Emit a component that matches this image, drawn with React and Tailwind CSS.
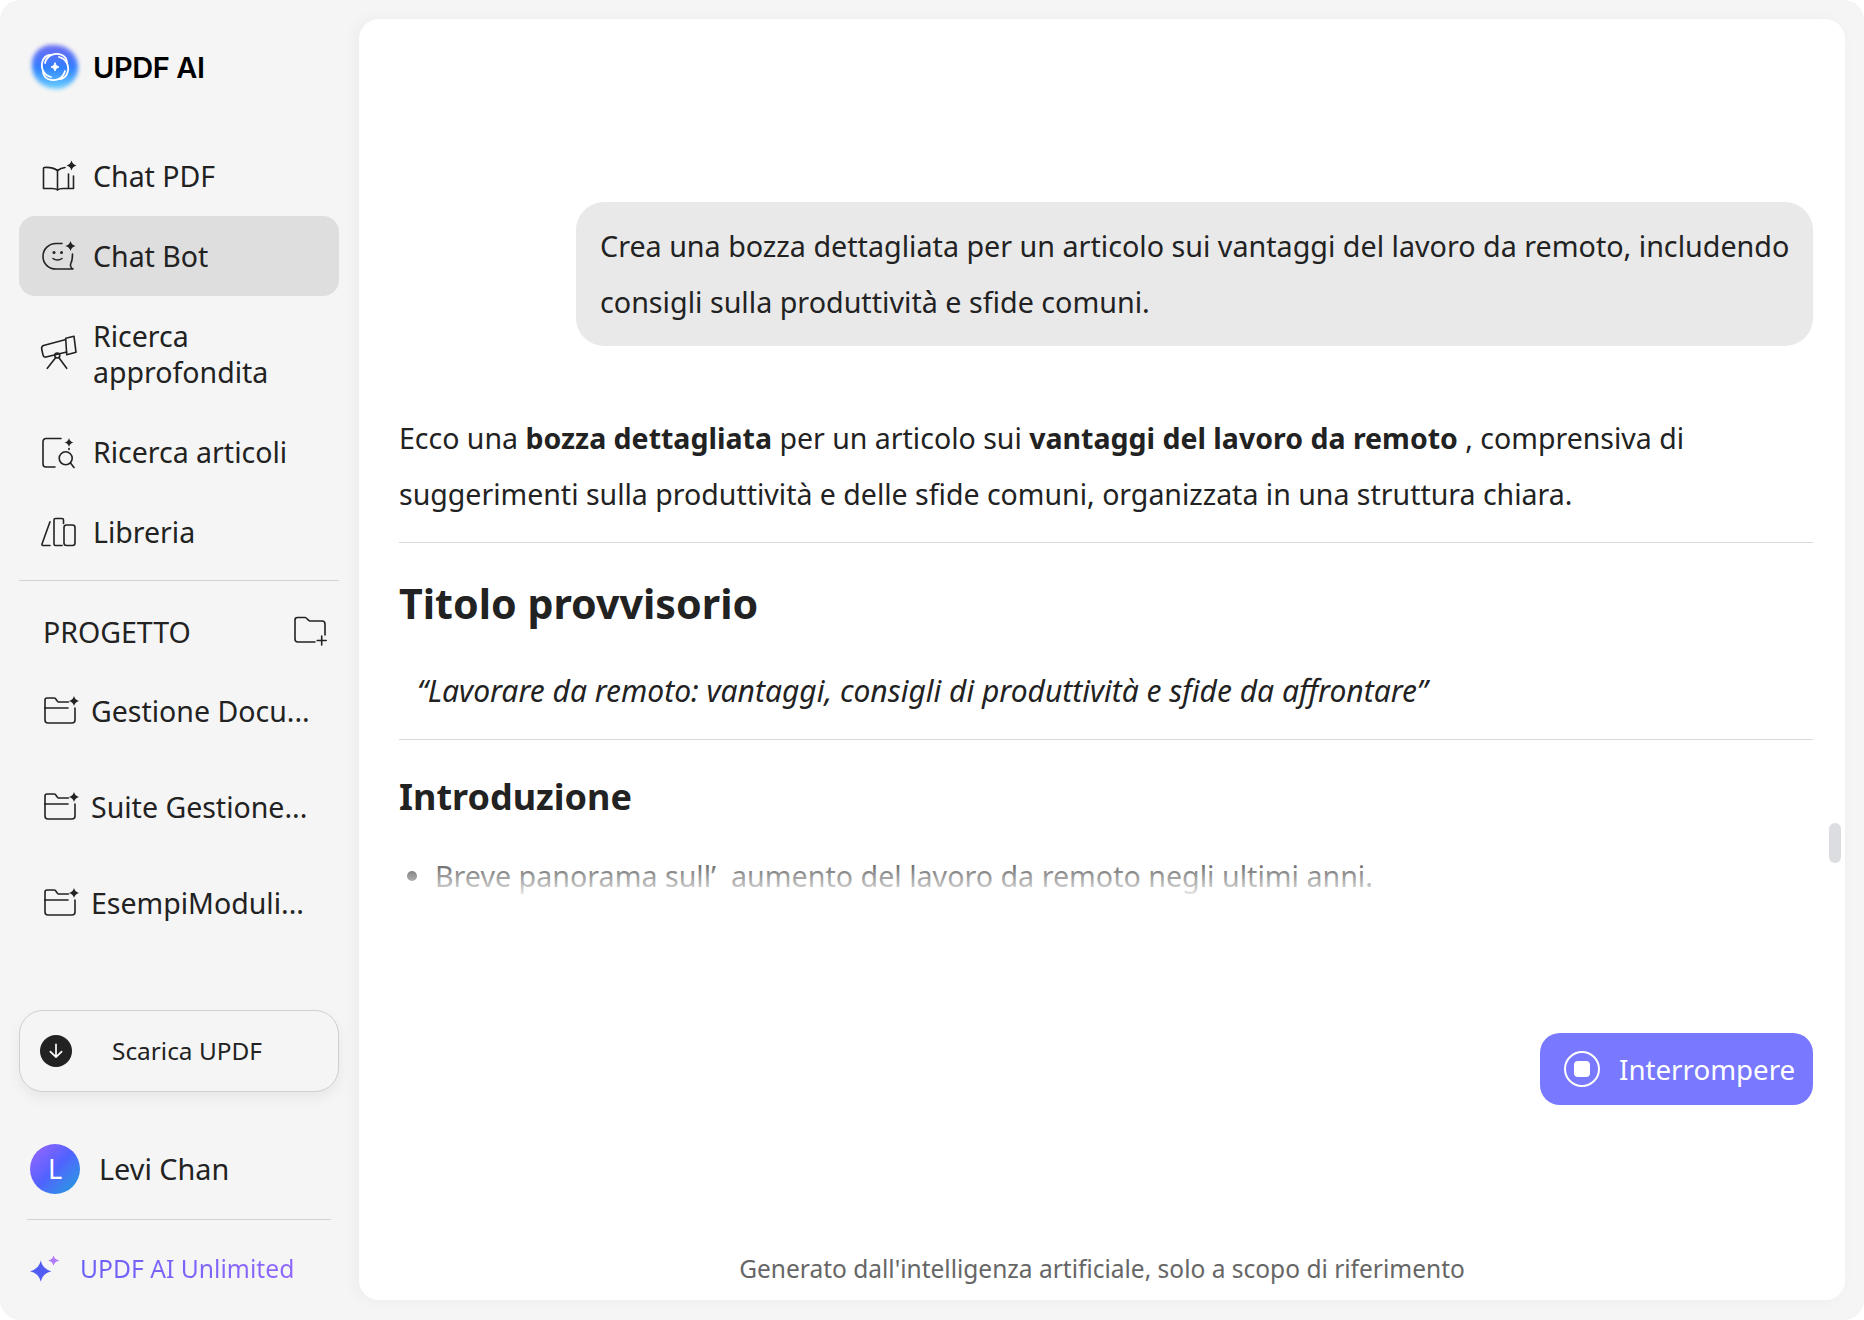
import React from "react";

const Spark = ({ x, y, r = 3.5 }) => (
  <path
    d={`M${x} ${y - r}Q${x + r * 0.2} ${y - r * 0.2} ${x + r} ${y}Q${x + r * 0.2} ${y + r * 0.2} ${x} ${y + r}Q${x - r * 0.2} ${y + r * 0.2} ${x - r} ${y}Q${x - r * 0.2} ${y - r * 0.2} ${x} ${y - r}Z`}
    fill="#222"
    stroke="none"
  />
);

const Icon = ({ children }) => (
  <svg viewBox="0 0 36 36" fill="none" stroke="#222" strokeWidth="1.6" strokeLinecap="round" strokeLinejoin="round" className="w-9 h-9 shrink-0 overflow-visible">
    {children}
  </svg>
);

const BookIcon = () => (
  <Icon>
    <path d="M16.500 12.500C13 10 8 9 3 9.500 2.500 9.500 2.500 10 2.500 10.500V30.500H11c2.500 0 4.300.3 5.500 1.500 1.200-1.200 3-1.500 5.500-1.500h10.500V18" />
    <path d="M16.500 12.500V31.500" />
    <path d="M24 9.500c-3 .3-5.500 1.500-7.500 3" />
    <path d="M27.500 16v14" />
    <Spark x={30.500} y={7.500} r={5} />
  </Icon>
);

const BotIcon = () => (
  <Icon>
    <path d="M21 5.500H15C8 5.500 2 11 2 18.500S8 31 15 31H32C29.500 30 29 27 30 25c1-2 1.500-5 1.500-9" />
    <circle cx="13" cy="14.500" r="1.500" fill="#222" stroke="none" />
    <circle cx="20.500" cy="14.500" r="1.500" fill="#222" stroke="none" />
    <path d="M12 20.500c2.500 2 6.500 2 9 0" />
    <Spark x={29.500} y={8} r={5} />
  </Icon>
);

const ScopeIcon = () => (
  <Icon>
    <path d="M24 3.700 2.500 9.500Q.2 10.500.7 13L2 19q.5 2.500 3 2L25.700 16" />
    <path d="M24.700 2.300 33 .3 35 16.300 25.700 18.700Z" />
    <circle cx="16.300" cy="19.500" r="2.500" />
    <path d="M14.800 21.500 6.300 32.300M17.800 21.500 25.700 32.300" />
  </Icon>
);

const SearchDocIcon = () => (
  <Icon>
    <path d="M20 4.500H5a3 3 0 0 0-3 3V30a3 3 0 0 0 3 3h9" />
    <circle cx="24.700" cy="24.300" r="6.500" />
    <path d="M29.500 29 33 33.500" />
    <path d="M28 14.500v1" />
    <Spark x={28} y={8.500} r={4.500} />
  </Icon>
);

const LibraryIcon = () => (
  <Icon>
    <path d="M9 7.700 1 30q-.5 1.500 1 1.500h7" />
    <path d="M21 31.500h-6.500a1.500 1.500 0 0 1-1.500-1.500V6a1.500 1.500 0 0 1 1.500-1.500H21a1.500 1.500 0 0 1 1.500 1.500v3.500" />
    <rect x="23" y="11" width="11" height="20.500" rx="2.500" />
  </Icon>
);

const FolderSparkIcon = () => (
  <Icon>
    <path d="M2 15V7a2 2 0 0 1 2-2h7.500c1.500 0 2.500 4 4 4h10" />
    <path d="M2 15v12a3 3 0 0 0 3 3h24a3 3 0 0 0 3-3V15" />
    <path d="M2 15h23" />
    <Spark x={31} y={8} r={5} />
  </Icon>
);

const FolderPlusIcon = () => (
  <Icon>
    <path d="M22 28H5a3 3 0 0 1-3-3V6a2.500 2.500 0 0 1 2.500-2.500H12c2 0 3 3.500 5 3.500h12a3 3 0 0 1 3 3v11" />
    <path d="M28.700 22v9M24.200 26.500h9" />
  </Icon>
);

const Logo = () => (
  <div className="relative w-[48px] h-[46px] flex items-center justify-center">
    <div className="absolute inset-[1px] rounded-[42%_50%_48%_52%] bg-gradient-to-b from-[#6a6cf2] via-[#2f7dff] to-[#6fd0ff] blur-[2px]" />
    <svg viewBox="0 0 36 36" fill="none" stroke="#fff" strokeWidth="1.800" strokeLinecap="round" className="relative w-9 h-9">
      <path d="M8 14C10 6 18 3 25 6c3 1.500 5 4.500 5 8" />
      <path d="M28 22C26 30 18 33 11 30c-3-1.500-5-4.500-5-8" />
      <path d="M22 8C30 10 33 18 30 25c-1.500 3-4.500 5-8 5" />
      <path d="M14 28C6 26 3 18 6 11c1.500-3 4.500-5 8-5" />
      <path d="M18 14Q18.500 17.500 22 18 18.500 18.500 18 22 17.500 18.500 14 18 17.500 17.500 18 14Z" fill="#fff" stroke="#fff" strokeWidth="1" />
    </svg>
  </div>
);

const NavItem = ({ icon, active, children }) => (
  <div className={`flex items-center gap-4 pl-[22px] pr-4 h-20 rounded-[16px] text-[28.5px] leading-[36px] ${active ? "bg-[#dedede]" : ""}`}>
    {icon}
    <span>{children}</span>
  </div>
);

const ProjectItem = ({ children }) => (
  <div className="flex items-center gap-3 pl-6 h-24 text-[28.5px] text-[#222]">
    <FolderSparkIcon />
    <span>{children}</span>
  </div>
);

export default function App() {
  return (
    <div className="w-[1864px] h-[1320px] bg-white overflow-hidden font-['Noto_Sans',sans-serif] text-[#222]">
      <div className="w-full h-full flex bg-[#f5f5f5] rounded-[20px]">
        {/* Sidebar */}
        <aside className="w-[359px] shrink-0 h-full flex flex-col pl-[19px] pr-5">
          <div className="flex items-center gap-[14px] pl-[12px] h-[46px] mt-[44px] mb-[46px]">
            <Logo />
            <span className="font-['Inter',sans-serif] text-[29px] font-semibold text-black tracking-[-0.4px] pt-[2px]">UPDF AI</span>
          </div>

          <NavItem icon={<BookIcon />}>Chat PDF</NavItem>
          <NavItem icon={<BotIcon />} active>Chat Bot</NavItem>
          <div className="py-[22px]">
            <div className="flex items-center gap-4 pl-[22px] text-[28.5px] leading-[36px]">
              <ScopeIcon />
              <span>Ricerca<br />approfondita</span>
            </div>
          </div>
          <NavItem icon={<SearchDocIcon />}>Ricerca articoli</NavItem>
          <NavItem icon={<LibraryIcon />}>Libreria</NavItem>

          <div className="h-px bg-[#d2d2d2] mt-2" />

          <div className="flex items-center justify-between pl-[24px] pr-[10px] mt-[27px] h-12 text-[28.5px]">
            <span>PROGETTO</span>
            <FolderPlusIcon />
          </div>

          <div className="mt-[7px]">
            <ProjectItem>Gestione Docu...</ProjectItem>
            <ProjectItem>Suite Gestione...</ProjectItem>
            <ProjectItem>EsempiModuli...</ProjectItem>
          </div>

          <div className="mt-[59px] h-[82px] rounded-[24px] border border-[#d0d0d0] bg-[#f5f5f5] shadow-[0_6px_14px_rgba(0,0,0,0.06)] flex items-center pl-5">
            <span className="w-8 h-8 rounded-full bg-[#222] flex items-center justify-center">
              <svg viewBox="0 0 16 16" fill="none" stroke="#fff" strokeWidth="1.500" strokeLinecap="round" strokeLinejoin="round" className="w-[18px] h-[18px]">
                <path d="M8 2v11M3 8.500 8 13.500l5-5" />
              </svg>
            </span>
            <span className="ml-10 text-[24.4px]">Scarica UPDF</span>
          </div>

          <div className="flex items-center gap-[19px] pl-[11px] mt-[52px] h-[50px]">
            <div className="w-[50px] h-[50px] rounded-full bg-gradient-to-br from-[#9a63ff] via-[#4f62ff] to-[#0a9fd8] flex items-center justify-center text-white text-[27px]">L</div>
            <span className="text-[28.8px]">Levi Chan</span>
          </div>

          <div className="h-px bg-[#d2d2d2] mx-2 mt-[25px]" />

          <div className="flex items-center gap-[19px] pl-[10px] mt-[29px] h-10">
            <svg viewBox="0 0 30 26" className="w-8 h-[28px] shrink-0">
              <path d="M11 5Q12.500 13 21 15 12.500 17 11 25 9.500 17 1 15 9.500 13 11 5Z" fill="#525cf2" />
              <path d="M23 0Q23.800 4 28.500 5 23.800 6 23 10 22.200 6 18 5 22.200 4 23 0Z" fill="#b07bf8" />
            </svg>
            <span className="text-[24.7px] bg-gradient-to-r from-[#6a5ff5] to-[#9068fb] bg-clip-text text-transparent">UPDF AI Unlimited</span>
          </div>
        </aside>

        {/* Main panel */}
        <main className="relative w-[1486px] h-[1281px] mt-[19px] bg-white rounded-[20px] shadow-[-4px_0_16px_rgba(0,0,0,0.04)] overflow-hidden">
          <div className="pt-[183px] pl-10 pr-8">
            <div className="flex justify-end">
              <div className="w-[1237px] pl-6 pr-3 py-4 bg-[#e9e9e9] rounded-[28px] text-[28.7px] leading-[56px]">
                Crea una bozza dettagliata per un articolo sui vantaggi del lavoro da remoto, includendo consigli sulla produttività e sfide comuni.
              </div>
            </div>

            <p className="mt-16 text-[28.5px] leading-[56px]">
              Ecco una <b>bozza dettagliata</b> per un articolo sui <b>vantaggi del lavoro da remoto</b> , comprensiva di suggerimenti sulla produttività e delle sfide comuni, organizzata in una struttura chiara.
            </p>

            <div className="h-px bg-[#d9d9d9] mt-5" />

            <h1 className="mt-8 text-[41.2px] leading-[56px] font-bold">Titolo provvisorio</h1>

            <p className="mt-8 pl-[18px] text-[30px] leading-[56px] italic">
              “Lavorare da remoto: vantaggi, consigli di produttività e sfide da affrontare”
            </p>

            <div className="h-px bg-[#d9d9d9] mt-5" />

            <h2 className="mt-[29px] text-[36px] leading-[56px] font-bold">Introduzione</h2>

            <ul className="mt-[23px] text-[28.65px] leading-[56px]">
              <li className="flex items-center">
                <span className="w-[10px] h-[10px] rounded-full bg-[#222] ml-2 mr-[18px]" />
                Breve panorama sull’&nbsp; aumento del lavoro da remoto negli ultimi anni.
              </li>
            </ul>
          </div>

          {/* fade over the streaming text */}
          <div className="absolute left-0 right-0 top-[838px] h-[44px] bg-gradient-to-b from-white/20 to-white" />
          <div className="absolute left-0 right-0 top-[882px] bottom-0 bg-white" />

          <div className="absolute right-[4px] top-[804px] w-3 h-10 rounded-full bg-[#dcdde0]" />

          <button className="absolute right-8 top-[1014px] w-[273px] h-[72px] rounded-[20px] bg-[#7879ff] text-white flex items-center pl-6 gap-[19px] text-[27.7px]">
            <span className="w-9 h-9 rounded-full border-2 border-white flex items-center justify-center">
              <span className="w-4 h-4 rounded-[4px] bg-white" />
            </span>
            <span className="pt-[2px]">Interrompere</span>
          </button>

          <div className="absolute left-0 right-0 bottom-3 text-center text-[24.5px] text-[#666]">
            Generato dall'intelligenza artificiale, solo a scopo di riferimento
          </div>
        </main>
      </div>
    </div>
  );
}
